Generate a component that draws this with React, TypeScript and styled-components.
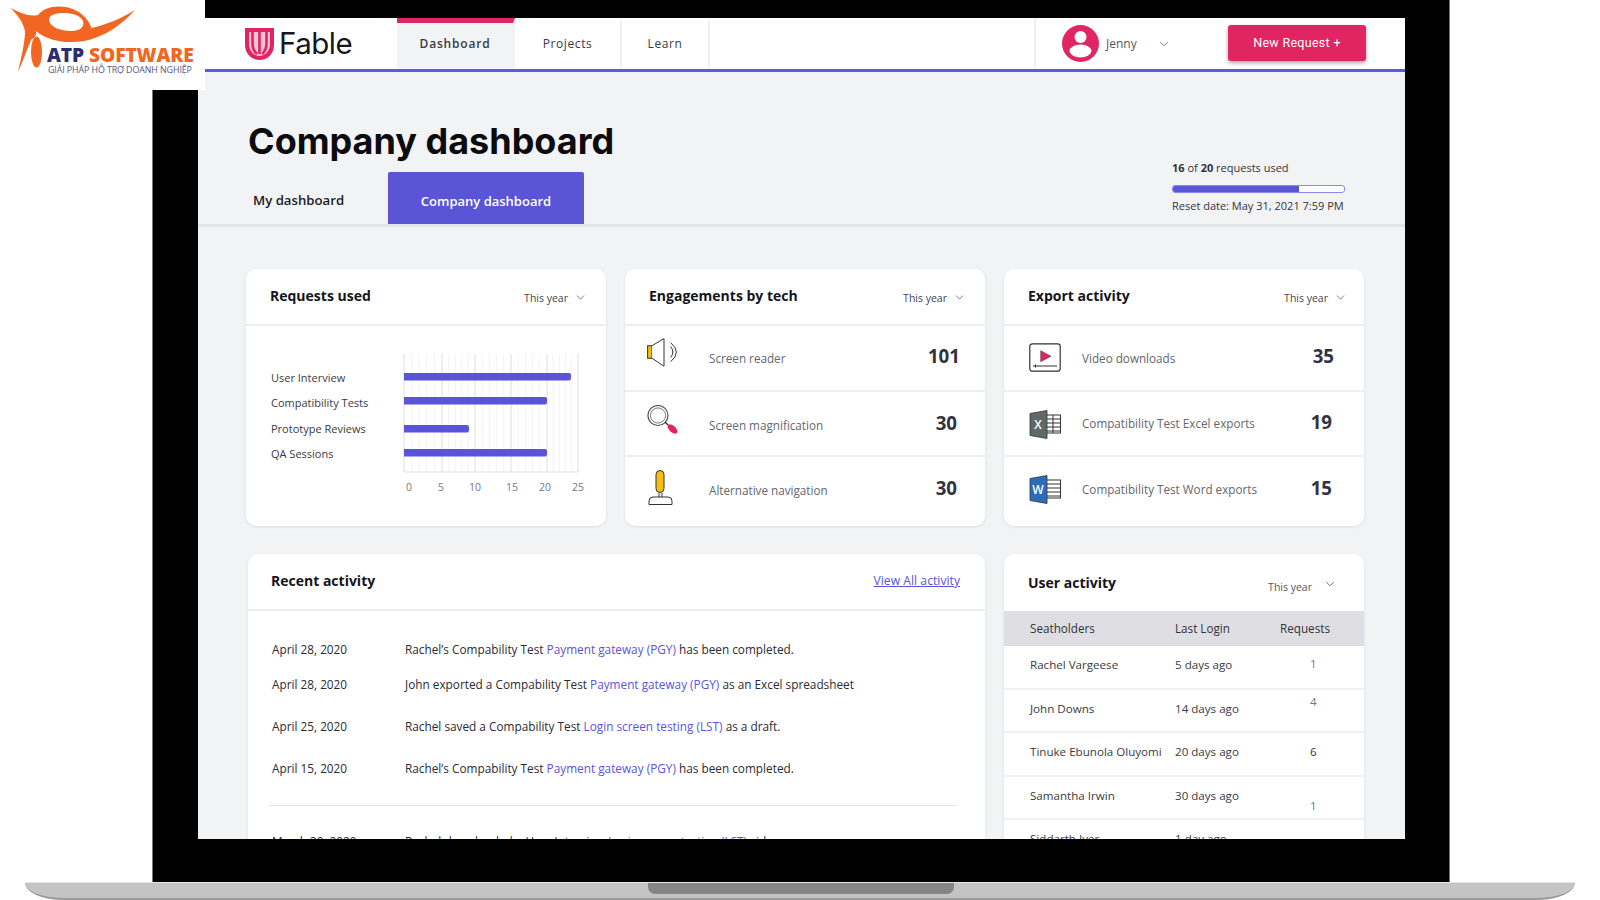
import React from "react";
import styled, { createGlobalStyle } from "styled-components";
import { ChevronDown } from "lucide-react";

const Global = createGlobalStyle`
  html, body { margin: 0; padding: 0; background: #fff; }
  * { box-sizing: border-box; }
  body { font-family: "Open Sans", "Liberation Sans", sans-serif; }
`;

const Page = styled.div`
  position: relative;
  width: 1600px;
  height: 900px;
  overflow: hidden;
  background: #fff;
`;

const LogoBadge = styled.div`
  position: absolute;
  left: 0;
  top: 0;
  width: 205px;
  height: 90px;
  background: #fff;
  z-index: 5;
`;
const LogoArt = styled.svg`
  position: absolute;
  left: 0;
  top: 0;
`;
const LogoName = styled.div`
  position: absolute;
  left: 47px;
  top: 47px;
  font: 800 19.2px/16px "Open Sans", sans-serif;
  letter-spacing: -0.1px;
  color: #f26522;
  white-space: nowrap;
`;
const LogoAtp = styled.span`
  color: #2d2c6e;
`;
const LogoTag = styled.div`
  position: absolute;
  left: 48px;
  top: 66px;
  font: 400 8.9px/8px "Open Sans", sans-serif;
  letter-spacing: -0.1px;
  color: #55557f;
  white-space: nowrap;
`;

const Bezel = styled.div`
  margin-left: 152px;
  width: 1298px;
  height: 882px;
  padding: 18px 44px 43px 45px;
  background: #000;
  border-left: 1px solid #777;
  border-right: 1px solid #777;
`;
const Screen = styled.div`
  width: 100%;
  height: 821px;
  overflow: hidden;
  background: #f2f3f5;
  display: flex;
  flex-direction: column;
`;
const Base = styled.div`
  margin-left: 25px;
  width: 1550px;
  height: 18px;
  background: #c4c4c4;
  border-top: 1px solid #e6e6e6;
  border-bottom: 2px solid #9b9b9b;
  border-radius: 0 0 38px 38px / 0 0 17px 17px;
  display: flex;
  justify-content: center;
`;
const Notch = styled.div`
  margin-left: 2px;
  width: 306px;
  height: 11px;
  background: #858585;
  border-radius: 0 0 7px 7px;
`;

const Header = styled.header`
  flex: none;
  height: 54px;
  display: flex;
  align-items: stretch;
  background: #fff;
  border-bottom: 3px solid #5e5ae0;
`;
const Brand = styled.div`
  width: 199px;
  padding-left: 47px;
  display: flex;
  align-items: center;
  gap: 5px;
`;
const BrandName = styled.span`
  font: 400 29.5px/1 "Inter", sans-serif;
  letter-spacing: -0.5px;
  color: #16161c;
`;
const NavTab = styled.div<{ $active?: boolean; $w: number }>`
  width: ${(p) => p.$w}px;
  display: flex;
  align-items: center;
  justify-content: center;
  font: ${(p) => (p.$active ? 600 : 400)} 12px/1 "Open Sans", sans-serif;
  letter-spacing: ${(p) => (p.$active ? 0.8 : 0.6)}px;
  color: #3a3a42;
  background: ${(p) => (p.$active ? "#f2f3f5" : "#fff")};
  border-top: 5px solid ${(p) => (p.$active ? "#e02562" : "#fff")};
  border-right: 2px solid ${(p) => (p.$active ? "#f2f3f5" : "#f0f0f2")};
  padding-bottom: 5px;
`;
const Spacer = styled.div`
  flex: 1;
`;
const UserMenu = styled.div`
  width: 194px;
  padding-left: 26px;
  border-left: 2px solid #f0f0f2;
  display: flex;
  align-items: center;
  color: #55555c;
  font-size: 12px;
`;
const JennyName = styled.span`
  margin-left: 7px;
  width: 51px;
`;
const NewRequest = styled.button`
  align-self: flex-start;
  margin: 7px 39px 0 0;
  width: 138px;
  height: 36px;
  border: 0;
  border-radius: 3px;
  background: #e02562;
  color: #fff;
  font: 400 12.5px/1 "Roboto", sans-serif;
  letter-spacing: 0.3px;
  box-shadow: 0 2px 4px rgba(0, 0, 0, 0.35);
`;

const Hero = styled.section`
  flex: none;
  height: 155px;
  padding: 0 60px 0 50px;
  display: flex;
  justify-content: space-between;
  align-items: flex-end;
  border-bottom: 3px solid #e3e4e7;
`;
const HeroLeft = styled.div`
  display: flex;
  flex-direction: column;
`;
const PageTitle = styled.h1`
  margin: 0 0 7px;
  font: 700 36px/48px "Inter", sans-serif;
  letter-spacing: 0;
  color: #0b0b10;
`;
const Tabs = styled.div`
  display: flex;
  align-items: stretch;
  height: 52px;
`;
const TabPlain = styled.div`
  width: 140px;
  padding-left: 5px;
  display: flex;
  align-items: center;
  padding-top: 6px;
  font: 600 13.2px/1 "Open Sans", sans-serif;
  color: #1c1c22;
`;
const TabActive = styled.div`
  width: 196px;
  display: flex;
  align-items: center;
  justify-content: center;
  padding-top: 6px;
  background: #5a55d6;
  border-radius: 2px 2px 0 0;
  color: #fff;
  font: 600 13px/1 "Open Sans", sans-serif;
`;
const Usage = styled.div`
  width: 173px;
  padding-bottom: 10px;
  font-size: 11px;
  color: #33333a;
`;
const UsageLine = styled.div`
  line-height: 16px;
  white-space: nowrap;
`;
const UsageTrack = styled.div`
  margin: 9px 0 5px;
  height: 8px;
  border: 1px solid #8d89e6;
  border-radius: 3px;
  background: #fff;
  overflow: hidden;
`;
const UsageFill = styled.div`
  height: 100%;
  background: #5a55d6;
`;

const Main = styled.main`
  flex: 1;
  padding: 42px 41px 0 48px;
`;
const TopGrid = styled.div`
  display: grid;
  grid-template-columns: repeat(3, 360px);
  gap: 19px;
`;
const BottomGrid = styled.div`
  margin-top: 28px;
  padding-left: 2px;
  display: grid;
  grid-template-columns: 737px 360px;
  gap: 19px;
`;
const Card = styled.article<{ $h?: number }>`
  background: #fff;
  border-radius: 10px;
  box-shadow: 0 1px 3px rgba(30, 30, 60, 0.1);
  height: ${(p) => (p.$h ? `${p.$h}px` : "auto")};
  overflow: hidden;
`;
const CardHead = styled.div<{ $left: number; $right: number }>`
  height: 57px;
  padding: 0 ${(p) => p.$right}px 2px ${(p) => p.$left}px;
  display: flex;
  align-items: center;
  justify-content: space-between;
  border-bottom: 2px solid #eeeef1;
`;
const CardTitle = styled.h2`
  margin: 0;
  font: 700 14px/20px "Open Sans", sans-serif;
  color: #15151b;
`;
const RangePick = styled.div`
  display: flex;
  align-items: center;
  gap: 6px;
  padding-top: 4px;
  font-size: 10.5px;
  color: #44444c;
`;

const ChartBody = styled.div`
  display: flex;
  padding: 27px 0 0 25px;
  height: 200px;
`;
const ChartLabels = styled.ul`
  list-style: none;
  margin: 0;
  padding: 15px 0 0;
  width: 133px;
  display: flex;
  flex-direction: column;
  gap: 5.3px;
  font-size: 11px;
  line-height: 20px;
  color: #3a3a42;
  white-space: nowrap;
`;

const StatRow = styled.div<{ $pl: number; $pr: number }>`
  height: 65.5px;
  padding: 0 ${(p) => p.$pr}px 0 ${(p) => p.$pl}px;
  display: flex;
  align-items: flex-start;
  border-bottom: 2px solid #eeeef1;
  &:last-child {
    border-bottom: 0;
    height: 69px;
  }
`;
const StatIcon = styled.svg<{ $top: number }>`
  flex: none;
  width: 32px;
  margin-top: ${(p) => p.$top}px;
`;
const StatLabel = styled.div<{ $top: number; $left: number }>`
  flex: 1;
  margin: ${(p) => p.$top}px 0 0 ${(p) => p.$left}px;
  font-size: 11.7px;
  line-height: 20px;
  color: #66666c;
  white-space: nowrap;
`;
const StatNum = styled.div<{ $top: number }>`
  margin-top: ${(p) => p.$top}px;
  font: 700 18.7px/24px "Open Sans", sans-serif;
  color: #33333f;
`;

const ActivityBody = styled.div`
  padding: 28px 28px 0 24px;
`;
const ActivityRow = styled.div<{ $gap: number }>`
  margin-top: ${(p) => p.$gap}px;
  display: grid;
  grid-template-columns: 133px 1fr;
  font-size: 11.8px;
  line-height: 20px;
  color: #2b2b32;
  white-space: nowrap;
`;
const Accent = styled.span`
  color: #5a55d6;
  font-weight: 500;
`;
const ViewAll = styled.a`
  font-size: 12.2px;
  color: #5a55d6;
  text-decoration: underline;
`;
const Rule = styled.hr`
  margin: 27px 0 25px -3px;
  border: 0;
  border-top: 1px solid #e6e6ea;
`;

const UserHead = styled.div`
  height: 57px;
  padding: 0 27px 0 24px;
  display: flex;
  justify-content: space-between;
  align-items: center;
`;
const UserRange = styled.div`
  display: flex;
  align-items: center;
  gap: 11px;
  padding-top: 8px;
  font-size: 10.5px;
  color: #55555e;
`;
const RaisedChev = styled.span`
  display: flex;
  margin-top: -6px;
`;
const Grid = styled.div`
  display: grid;
  grid-template-columns: 145px 94px 1fr;
`;
const TableHead = styled(Grid)`
  height: 35px;
  padding: 0 0 2px 26px;
  align-items: center;
  background: #dfdfe3;
  font-size: 11.7px;
  color: #33333a;
`;
const TableRow = styled(Grid)`
  height: 43.6px;
  padding-left: 26px;
  border-bottom: 2px solid #f1f1f3;
  font-size: 11.6px;
  line-height: 18px;
  color: #3a3a42;
  white-space: nowrap;
`;
const Cell = styled.div`
  padding-top: 10px;
`;
const ReqHead = styled.div`
  padding-left: 11px;
  white-space: nowrap;
`;
const ReqCell = styled.div<{ $top: number; $dark?: boolean }>`
  padding: ${(p) => p.$top}px 0 0 41px;
  font-size: 11.5px;
  color: ${(p) => (p.$dark ? "#33333a" : "#77777f")};
`;

const Chev = ({ size = 14 }: { size?: number }) => (
  <ChevronDown size={size} strokeWidth={1.4} color="#55555e" />
);

const ATPLogo = () => (
  <LogoBadge>
    <LogoArt width="205" height="90" viewBox="0 0 205 90">
      <path
        fillRule="evenodd"
        fill="#f26522"
        d="M10 7.5C20 13 30 17 38 15C43 8 54 5 66 7C79 9.5 88 18 91.5 28C106 25 122 18 135 10C122 25 104 37 84 41C66 44 48 41 36 31C37 37 32 39 31 40C26 52 22 63 18 72C21 58 25 43 25 31C23 22 17 14 10 7.5ZM49 20C50 27 60 31 71 31C80 31 85 27 83 21C80 15 72 13 63 13C55 13 49 15 49 20Z"
      />
      <ellipse cx="36.5" cy="52" rx="5.5" ry="15.5" fill="#f26522" />
    </LogoArt>
    <LogoName>
      <LogoAtp>ATP</LogoAtp> SOFTWARE
    </LogoName>
    <LogoTag>GIẢI PHÁP HỖ TRỢ DOANH NGHIỆP</LogoTag>
  </LogoBadge>
);

const FableMark = () => (
  <svg width="29" height="32" viewBox="0 0 29 32">
    <path d="M0 0H29V17C29 26 22 32 14.5 32C7 32 0 26 0 17Z" fill="#e02562" />
    <path d="M4 4H25V16C25 23 20 28 14.5 28C9 28 4 23 4 16Z" fill="#f7c3d5" />
    <path d="M7.5 4V15C7.5 20 9.5 24 12 26M14.5 4V26M21.5 4V15C21.5 20 19.5 24 17 26" stroke="#e02562" strokeWidth="2.6" fill="none" />
  </svg>
);

const Avatar = () => (
  <svg width="37" height="37" viewBox="0 0 37 37">
    <circle cx="18.5" cy="18.5" r="18.5" fill="#e02562" />
    <circle cx="18.5" cy="12" r="6" fill="#fff" />
    <ellipse cx="18.5" cy="26" rx="11" ry="6.5" fill="#fff" />
  </svg>
);

const SpeakerIcon = () => (
  <StatIcon $top={12} height="29" viewBox="0 0 32 29">
    <rect x="0.6" y="7.7" width="4.4" height="12.6" fill="#f6be12" stroke="#333" strokeWidth="1" />
    <path d="M5 7.7L17 0.6V28.2L5 20.3" fill="#fff" stroke="#333" strokeWidth="1" />
    <path d="M23.7 8.5Q28 14 23.7 19.5M23.7 4.7Q35 14 23.7 23.7" fill="none" stroke="#333" strokeWidth="1" />
  </StatIcon>
);
const MagnifierIcon = () => (
  <StatIcon $top={13} height="29" viewBox="0 0 32 29">
    <circle cx="11" cy="10.5" r="10" fill="none" stroke="#555" strokeWidth="1.2" />
    <circle cx="11" cy="10.5" r="7.6" fill="none" stroke="#777" strokeWidth="1" />
    <path d="M18 17L21 20" stroke="#333" strokeWidth="1.4" />
    <ellipse cx="25.5" cy="24" rx="6" ry="3.2" transform="rotate(42 25.5 24)" fill="#e02562" />
  </StatIcon>
);
const JoystickIcon = () => (
  <StatIcon $top={13} height="36" viewBox="0 0 32 36">
    <rect x="9" y="0.5" width="8" height="22" rx="4" fill="#f6be12" stroke="#333" strokeWidth="1" />
    <path d="M12 23V27M15 23V27" stroke="#333" strokeWidth="1" />
    <path d="M2 34.5V31Q2 27 6 27H21Q25 27 25 31V34.5Z" fill="#fff" stroke="#333" strokeWidth="1" />
  </StatIcon>
);
const VideoIcon = () => (
  <StatIcon $top={17} height="29" viewBox="0 0 32 29">
    <rect x="0.8" y="0.8" width="30.4" height="27.4" rx="2.5" fill="#fff" stroke="#333" strokeWidth="1.2" />
    <path d="M11.7 7.7L22 13.2L11.7 18.7Z" fill="#e02562" stroke="#333" strokeWidth="0.5" />
    <path d="M4 23H28M6.5 21.5V24.5" stroke="#333" strokeWidth="1" />
  </StatIcon>
);
const DocIcon = ({ fill, letter, top }: { fill: string; letter: string; top: number }) => (
  <StatIcon $top={top} height="29" viewBox="0 0 32 29">
    <rect x="17" y="5" width="14.5" height="18" fill="#fff" stroke="#333" strokeWidth="1" />
    <path d="M18 9H31M18 13H31M18 17H31M18 21H31" stroke="#333" strokeWidth="1.2" />
    {letter === "X" && <path d="M24 5V23" stroke="#333" strokeWidth="1" />}
    <path d="M1 3.5L18 0.5V28.5L1 25.5Z" fill={fill} stroke="#333" strokeWidth="0.8" />
    <text x="9" y="19" textAnchor="middle" fontFamily="Open Sans, sans-serif" fontSize="12" fontWeight="600" fill="#fff">
      {letter}
    </text>
  </StatIcon>
);

const majors = [404, 442, 475, 511, 547, 578];
const bars = [
  { y: 373, end: 571 },
  { y: 397, end: 547 },
  { y: 425, end: 469 },
  { y: 449, end: 547 },
];
const ticks = [
  { x: 409, t: "0" },
  { x: 441, t: "5" },
  { x: 475, t: "10" },
  { x: 512, t: "15" },
  { x: 545, t: "20" },
  { x: 578, t: "25" },
];
const BarChart = () => {
  const minors: number[] = [];
  for (let i = 0; i < majors.length - 1; i++) {
    for (let k = 1; k < 5; k++) minors.push(majors[i] + ((majors[i + 1] - majors[i]) * k) / 5);
  }
  return (
    <svg width="200" height="150" viewBox="404 353 200 150" style={{ overflow: "visible" }}>
      {minors.map((x) => (
        <line key={x} x1={x} x2={x} y1="354" y2="472" stroke="#f3f3f6" strokeWidth="1" />
      ))}
      {majors.map((x) => (
        <line key={x} x1={x} x2={x} y1="354" y2="472" stroke="#dedee4" strokeWidth="1" />
      ))}
      <line x1="404" x2="578" y1="472" y2="472" stroke="#dedee4" strokeWidth="1" />
      {bars.map((b) => (
        <path key={b.y} d={`M404 ${b.y}H${b.end - 2}Q${b.end} ${b.y} ${b.end} ${b.y + 2}V${b.y + 5}Q${b.end} ${b.y + 7.5} ${b.end - 2} ${b.y + 7.5}H404Z`} fill="#5a55d6" />
      ))}
      {ticks.map((t) => (
        <text key={t.t} x={t.x} y="491" textAnchor="middle" fontFamily="Open Sans, sans-serif" fontSize="10.5" fill="#77777f">
          {t.t}
        </text>
      ))}
    </svg>
  );
};

const activity = [
  { gap: 0, date: "April 28, 2020", pre: "Rachel’s Compability Test ", link: "Payment gateway (PGY)", post: " has been completed." },
  { gap: 15, date: "April 28, 2020", pre: "John exported a Compability Test ", link: "Payment gateway (PGY)", post: " as an Excel spreadsheet" },
  { gap: 22, date: "April 25, 2020", pre: "Rachel saved a Compability Test ", link: "Login screen testing (LST)", post: " as a draft." },
  { gap: 22, date: "April 15, 2020", pre: "Rachel’s Compability Test ", link: "Payment gateway (PGY)", post: " has been completed." },
];

const users = [
  { name: "Rachel Vargeese", login: "5 days ago", req: "1", top: 9 },
  { name: "John Downs", login: "14 days ago", req: "4", top: 3 },
  { name: "Tinuke Ebunola Oluyomi", login: "20 days ago", req: "6", top: 10, dark: true },
  { name: "Samantha Irwin", login: "30 days ago", req: "1", top: 20 },
  { name: "Siddarth Iyer", login: "1 day ago", req: "", top: 9 },
];

export default function App() {
  return (
    <Page>
      <Global />
      <ATPLogo />
      <Bezel>
        <Screen>
          <Header>
            <Brand>
              <FableMark />
              <BrandName>Fable</BrandName>
            </Brand>
            <NavTab $active $w={118}>Dashboard</NavTab>
            <NavTab $w={107}>Projects</NavTab>
            <NavTab $w={88}>Learn</NavTab>
            <Spacer />
            <UserMenu>
              <Avatar />
              <JennyName>Jenny</JennyName>
              <Chev />
            </UserMenu>
            <NewRequest>New Request +</NewRequest>
          </Header>
          <Hero>
            <HeroLeft>
              <PageTitle>Company dashboard</PageTitle>
              <Tabs>
                <TabPlain>My dashboard</TabPlain>
                <TabActive>Company dashboard</TabActive>
              </Tabs>
            </HeroLeft>
            <Usage>
              <UsageLine>
                <b>16</b> of <b>20</b> requests used
              </UsageLine>
              <UsageTrack>
                <UsageFill style={{ width: `${(16 / 20) * 92}%` }} />
              </UsageTrack>
              <UsageLine>Reset date: May 31, 2021 7:59 PM</UsageLine>
            </Usage>
          </Hero>
          <Main>
            <TopGrid>
              <Card $h={257}>
                <CardHead $left={24} $right={19}>
                  <CardTitle>Requests used</CardTitle>
                  <RangePick>This year <Chev size={13} /></RangePick>
                </CardHead>
                <ChartBody>
                  <ChartLabels>
                    <li>User Interview</li>
                    <li>Compatibility Tests</li>
                    <li>Prototype Reviews</li>
                    <li>QA Sessions</li>
                  </ChartLabels>
                  <BarChart />
                </ChartBody>
              </Card>
              <Card $h={257}>
                <CardHead $left={24} $right={19}>
                  <CardTitle>Engagements by tech</CardTitle>
                  <RangePick>This year <Chev size={13} /></RangePick>
                </CardHead>
                <StatRow $pl={22} $pr={25}>
                  <SpeakerIcon />
                  <StatLabel $top={22} $left={30}>Screen reader</StatLabel>
                  <StatNum $top={18}>101</StatNum>
                </StatRow>
                <StatRow $pl={22} $pr={28}>
                  <MagnifierIcon />
                  <StatLabel $top={23} $left={30}>Screen magnification</StatLabel>
                  <StatNum $top={19}>30</StatNum>
                </StatRow>
                <StatRow $pl={22} $pr={28}>
                  <JoystickIcon />
                  <StatLabel $top={23} $left={30}>Alternative navigation</StatLabel>
                  <StatNum $top={19}>30</StatNum>
                </StatRow>
              </Card>
              <Card $h={257}>
                <CardHead $left={24} $right={17}>
                  <CardTitle>Export activity</CardTitle>
                  <RangePick>This year <Chev size={13} /></RangePick>
                </CardHead>
                <StatRow $pl={25} $pr={30}>
                  <VideoIcon />
                  <StatLabel $top={22} $left={21}>Video downloads</StatLabel>
                  <StatNum $top={18}>35</StatNum>
                </StatRow>
                <StatRow $pl={25} $pr={32}>
                  <DocIcon fill="#5f6a66" letter="X" top={18} />
                  <StatLabel $top={21} $left={21}>Compatibility Test Excel exports</StatLabel>
                  <StatNum $top={18}>19</StatNum>
                </StatRow>
                <StatRow $pl={25} $pr={32}>
                  <DocIcon fill="#2a6ebb" letter="W" top={18} />
                  <StatLabel $top={22} $left={21}>Compatibility Test Word exports</StatLabel>
                  <StatNum $top={19}>15</StatNum>
                </StatRow>
              </Card>
            </TopGrid>
            <BottomGrid>
              <Card $h={300}>
                <CardHead $left={23} $right={25}>
                  <CardTitle>Recent activity</CardTitle>
                  <ViewAll>View All activity</ViewAll>
                </CardHead>
                <ActivityBody>
                  {activity.map((a, i) => (
                    <ActivityRow key={i} $gap={a.gap}>
                      <span>{a.date}</span>
                      <span>
                        {a.pre}
                        <Accent>{a.link}</Accent>
                        {a.post}
                      </span>
                    </ActivityRow>
                  ))}
                  <Rule />
                  <ActivityRow $gap={0}>
                    <span>March 30, 2020</span>
                    <span>
                      Rachel downloaded a User Interview <Accent>Login screen testing (LST)</Accent> video
                    </span>
                  </ActivityRow>
                </ActivityBody>
              </Card>
              <Card $h={300}>
                <UserHead>
                  <CardTitle>User activity</CardTitle>
                  <UserRange>
                    This year
                    <RaisedChev><Chev size={14} /></RaisedChev>
                  </UserRange>
                </UserHead>
                <TableHead>
                  <span>Seatholders</span>
                  <span>Last Login</span>
                  <ReqHead>Requests</ReqHead>
                </TableHead>
                {users.map((u) => (
                  <TableRow key={u.name}>
                    <Cell>{u.name}</Cell>
                    <Cell>{u.login}</Cell>
                    <ReqCell $top={u.top} $dark={u.dark}>{u.req}</ReqCell>
                  </TableRow>
                ))}
              </Card>
            </BottomGrid>
          </Main>
        </Screen>
      </Bezel>
      <Base>
        <Notch />
      </Base>
    </Page>
  );
}
